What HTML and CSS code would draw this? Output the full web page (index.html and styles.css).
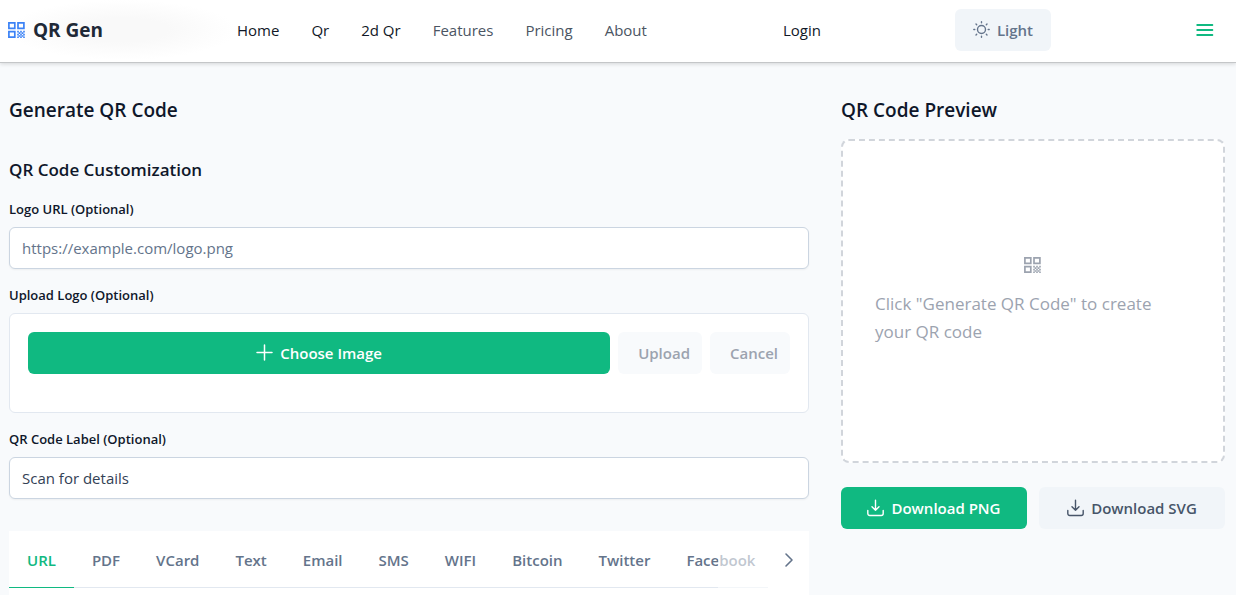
FILE: index.html
```html
<!DOCTYPE html>
<html lang="en">
<head>
<meta charset="utf-8">
<meta name="viewport" content="width=device-width, initial-scale=1">
<title>QR Gen</title>
<link rel="stylesheet" href="styles.css">
</head>
<body>
<svg width="0" height="0" class="sprite" aria-hidden="true">
  <symbol id="qr" viewBox="0 0 18 18">
    <path d="M.9 1.800h5.900v5.500H.9zM10 1.800h5.900v5.500H10zM.9 10.600h5.900v5.500H.9z" fill="none" stroke="currentColor" stroke-width="1.700"/>
    <path d="M9.200 9.800h1.600v1.600H9.200zM12.200 9.800h1.600v1.600h-1.600zM15.200 9.800h1.600v1.600h-1.600zM10.700 11.300h1.600v1.600h-1.600zM13.700 11.300h1.600v1.600h-1.600zM9.200 12.800h1.600v1.600H9.200zM12.200 12.800h1.600v1.600h-1.600zM15.200 12.800h1.600v1.600h-1.600zM10.700 14.200h1.600v1.600h-1.600zM13.700 14.200h1.600v1.600h-1.600zM9.200 15.600h1.600v1.400H9.200zM12.200 15.600h1.600v1.400h-1.600zM15.200 15.600h1.600v1.400h-1.600z" fill="currentColor"/>
  </symbol>
  <symbol id="download" viewBox="0 0 18 18">
    <path d="M8.500 1.200v10M5 7.800l3.500 3.500L12 7.800M.8 11.500v3a2 2 0 0 0 2 2h11.400a2 2 0 0 0 2-2v-3" fill="none" stroke="currentColor" stroke-width="1.400" stroke-linecap="round" stroke-linejoin="round"/>
  </symbol>
</svg>

<header class="header">
  <a class="brand" href="#"><svg class="icon"><use href="#qr"/></svg>QR Gen</a>
  <nav class="nav">
    <a href="#">Home</a>
    <a href="#">Qr</a>
    <a href="#">2d Qr</a>
    <a class="muted" href="#">Features</a>
    <a class="muted" href="#">Pricing</a>
    <a class="muted" href="#">About</a>
  </nav>
  <div class="actions">
    <a href="#">Login</a>
    <button class="btn btn-theme" type="button">
      <svg class="icon" viewBox="0 0 18 18" fill="none" stroke="currentColor" stroke-width="1.400" stroke-linecap="round"><circle cx="8.500" cy="8.500" r="4"/><path d="M8.500 .8v1M8.500 15.200v1M.8 8.500h1M15.200 8.500h1M3 3l.7.7M13.300 13.300l.7.7M3 14l.7-.7M13.300 3.700l.7-.7"/></svg>
      Light
    </button>
    <button class="menu" type="button" aria-label="Menu">
      <svg class="icon" viewBox="0 0 18 18" fill="none" stroke="currentColor" stroke-width="1.800" stroke-linecap="round"><path d="M1.200 4h15.200M1.200 9h15.200M1.200 14h15.200"/></svg>
    </button>
  </div>
</header>

<main class="main">
  <section class="form">
    <h2>Generate QR Code</h2>
    <h3>QR Code Customization</h3>
    <div class="field">
      <label for="logo-url">Logo URL (Optional)</label>
      <input id="logo-url" type="text" placeholder="https://example.com/logo.png">
    </div>
    <div class="field">
      <span class="label">Upload Logo (Optional)</span>
      <div class="upload">
        <button class="btn btn-primary choose" type="button">
          <svg class="icon" viewBox="0 0 18 18" fill="none" stroke="currentColor" stroke-width="1.500" stroke-linecap="round"><path d="M8.500 1v15M1 8.500h15"/></svg>
          Choose Image
        </button>
        <button class="btn btn-disabled" type="button" disabled>Upload</button>
        <button class="btn btn-disabled" type="button" disabled>Cancel</button>
      </div>
    </div>
    <div class="field">
      <label for="qr-label">QR Code Label (Optional)</label>
      <input id="qr-label" type="text" value="Scan for details">
    </div>
    <div class="panel">
      <div class="tabs">
        <div class="tablist" role="tablist">
          <button class="tab active" type="button" role="tab" aria-selected="true">URL</button>
          <button class="tab" type="button" role="tab">PDF</button>
          <button class="tab" type="button" role="tab">VCard</button>
          <button class="tab" type="button" role="tab">Text</button>
          <button class="tab" type="button" role="tab">Email</button>
          <button class="tab" type="button" role="tab">SMS</button>
          <button class="tab" type="button" role="tab">WIFI</button>
          <button class="tab" type="button" role="tab">Bitcoin</button>
          <button class="tab" type="button" role="tab">Twitter</button>
          <button class="tab" type="button" role="tab">Facebook</button>
        </div>
        <button class="next" type="button" aria-label="Next tabs">
          <svg class="icon" viewBox="0 0 18 18" fill="none" stroke="currentColor" stroke-width="1.600" stroke-linecap="round" stroke-linejoin="round"><path d="M6 3l6 6-6 6"/></svg>
        </button>
      </div>
    </div>
  </section>

  <section class="preview">
    <h2>QR Code Preview</h2>
    <div class="canvas">
      <svg class="icon"><use href="#qr"/></svg>
      <p>Click "Generate QR Code" to create your QR code</p>
    </div>
    <div class="downloads">
      <button class="btn btn-primary" type="button"><svg class="icon"><use href="#download"/></svg>Download PNG</button>
      <button class="btn btn-secondary" type="button"><svg class="icon"><use href="#download"/></svg>Download SVG</button>
    </div>
  </section>
</main>
</body>
</html>
```

FILE: styles.css
```css
* {
  box-sizing: border-box;
}

body {
  margin: 0;
  min-height: 100vh;
  display: flex;
  flex-direction: column;
  background: #f8fafc;
  color: #0f172a;
  font: 15px/24px "Open Sans", "Noto Sans", sans-serif;
}

h2, h3, p {
  margin: 0;
}

a {
  color: #111827;
  text-decoration: none;
}

button, input {
  font: inherit;
}

button {
  border: 0;
  padding: 0;
}

.sprite {
  position: absolute;
}

.icon {
  width: 18px;
  height: 18px;
  flex: none;
}

.header {
  display: flex;
  align-items: center;
  height: 63px;
  padding: 0 11px 2px 8px;
  background: #fff;
  border-bottom: 1px solid #c4c6c8;
  box-shadow: 0 1px 4px rgba(0, 0, 0, 0.15);
}

.brand {
  display: flex;
  align-items: center;
  align-self: stretch;
  gap: 7px;
  width: 229px;
  background: radial-gradient(closest-side, #f9f9f9 40%, #fff);
  color: #1f2937;
  font-size: 19px;
  font-weight: 700;
}

.brand .icon {
  color: #3b82f6;
}

.nav {
  display: flex;
  gap: 32px;
}

.nav .muted {
  color: #4b5563;
}

.actions {
  display: flex;
  align-items: center;
  gap: 134px;
  margin-left: auto;
}

.btn {
  display: flex;
  align-items: center;
  justify-content: center;
  gap: 6px;
  height: 42px;
  border-radius: 6px;
  font-weight: 600;
}

.btn-theme {
  width: 96px;
  background: #f1f5f9;
  color: #64748b;
}

.menu {
  display: grid;
  place-items: center;
  width: 40px;
  height: 40px;
  background: none;
  color: #10b981;
}

.main {
  flex: 1;
  display: grid;
  grid-template-columns: repeat(3, minmax(0, 1fr));
  gap: 32px;
  padding: 33px 11px 0 9px;
}

h2 {
  font-size: 19px;
  line-height: 28px;
  font-weight: 600;
}

h3 {
  margin: 32px 0 15px;
  font-size: 17px;
  line-height: 28px;
  font-weight: 600;
}

.form {
  grid-column: span 2;
  display: flex;
  flex-direction: column;
}

.field {
  display: flex;
  flex-direction: column;
  gap: 8px;
  margin-bottom: 16px;
}

label, .label {
  font-size: 13px;
  line-height: 20px;
  font-weight: 600;
}

input {
  height: 42px;
  padding: 0 12px;
  border: 1px solid #cbd5e1;
  border-radius: 6px;
  background: #fff;
  color: #334155;
  box-shadow: 0 1px 2px rgba(18, 18, 23, 0.05);
}

input::placeholder {
  color: #64748b;
}

.upload {
  display: flex;
  gap: 8px;
  height: 100px;
  padding: 18px;
  border: 1px solid #e2e8f0;
  border-radius: 6px;
  background: #fff;
}

.btn-primary {
  background: #10b981;
  color: #fff;
}

.choose {
  flex: 1;
}

.btn-disabled {
  padding: 0 12px 0 20px;
  background: #f8fafc;
  color: #9ca3af;
}

.panel {
  flex: 1;
  margin-top: 16px;
  background: #fff;
}

.tabs {
  display: flex;
}

.tablist {
  position: relative;
  flex: 1;
  display: flex;
  min-width: 0;
  overflow: hidden;
  box-shadow: inset 0 -1px #e2e8f0;
}

.tablist::after {
  content: "";
  position: absolute;
  inset: 0 0 0 auto;
  width: 50px;
  background: rgba(255, 255, 255, 0.6);
}

.tab {
  height: 57px;
  padding: 0 18px;
  background: none;
  color: #64748b;
  font-weight: 600;
}

.tab.active {
  box-shadow: inset 0 -1px #10b981;
  color: #10b981;
}

.next {
  display: grid;
  place-items: center;
  width: 41px;
  background: none;
  color: #64748b;
}

.preview {
  display: flex;
  flex-direction: column;
}

.canvas {
  display: flex;
  flex-direction: column;
  align-items: center;
  justify-content: center;
  gap: 16px;
  height: 324px;
  margin-top: 15px;
  padding: 0 32px;
  border: 2px dashed #d1d5db;
  border-radius: 8px;
  background: #fff;
  color: #9ca3af;
  font-size: 17px;
  line-height: 28px;
}

.downloads {
  display: grid;
  grid-template-columns: 1fr 1fr;
  gap: 12px;
  margin-top: 24px;
}

.btn-secondary {
  background: #f1f5f9;
  color: #475569;
}
```
